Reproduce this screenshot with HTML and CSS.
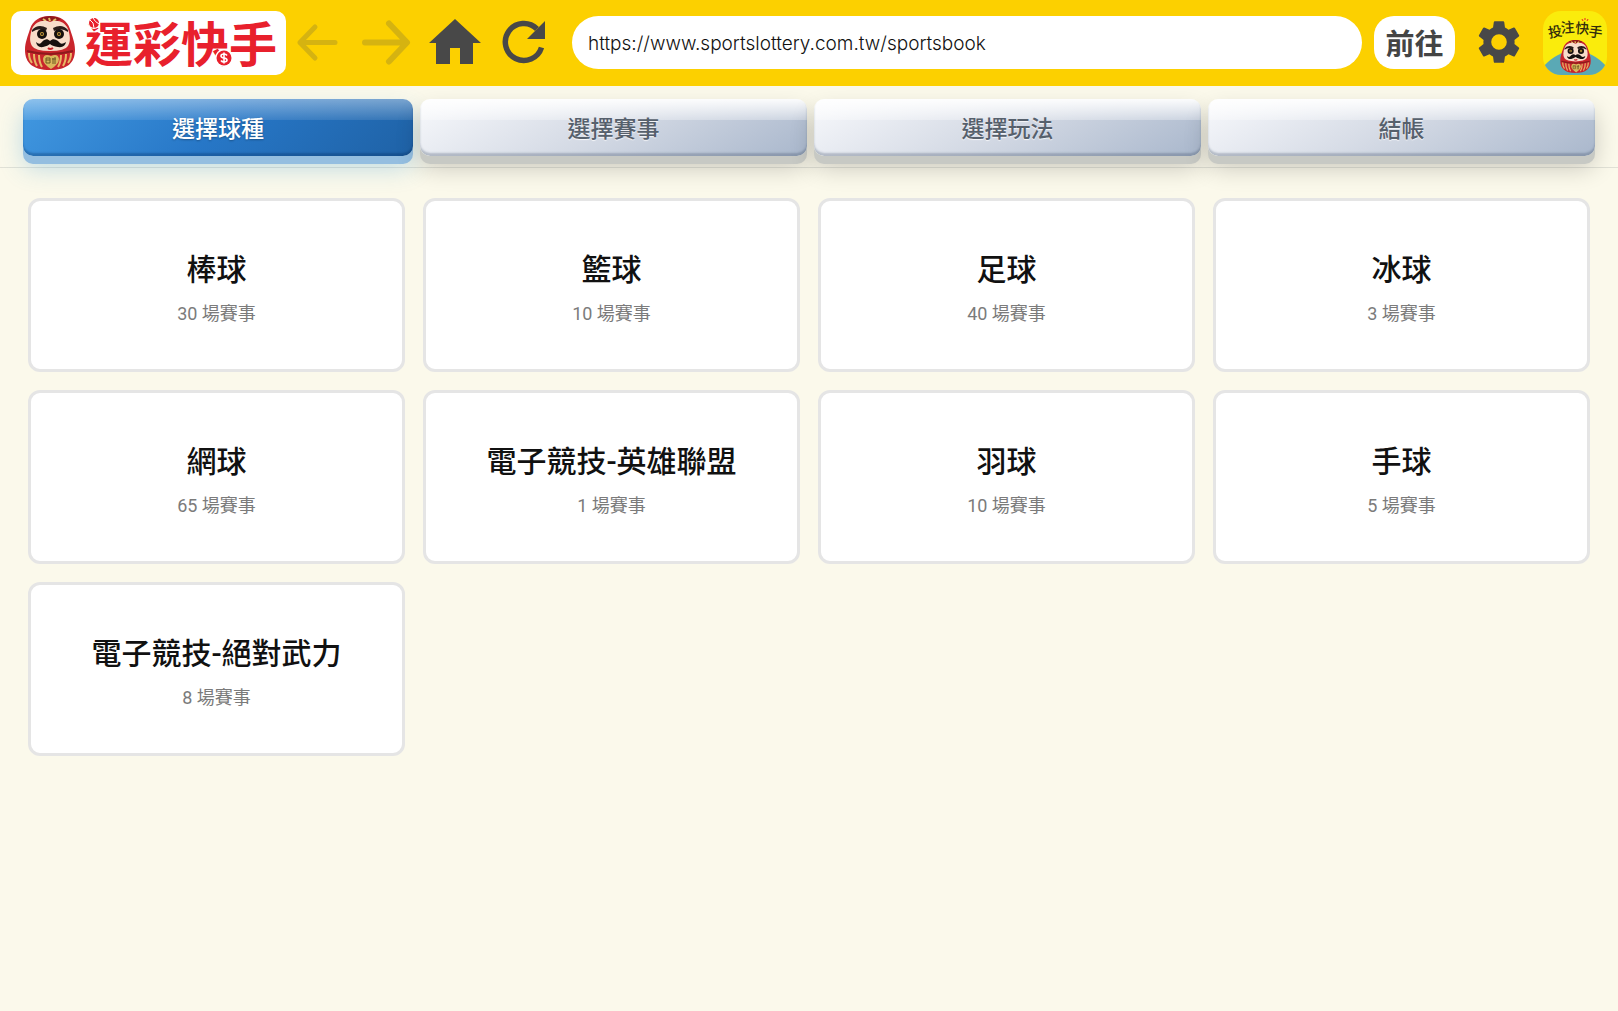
FILE: index.html
```html
<!DOCTYPE html>
<html lang="zh-Hant">
<head>
<meta charset="utf-8">
<meta name="viewport" content="width=device-width, initial-scale=1">
<title>運彩快手</title>
<link rel="stylesheet" href="styles.css">
</head>
<body>
<svg class="defs" aria-hidden="true">
  <symbol id="daruma" viewBox="0 0 50 54">
    <path d="M25 0C35 0 42 4 45 13C47 20 50 26 50 34C50 47 42 54 25 54S0 47 0 34C0 26 3 20 5 13C8 4 15 0 25 0Z" fill="#c9252c"/>
    <path d="M14 3Q25-3 36 3Q32 6 25 5Q18 6 14 3Z" fill="#8d1a1c"/>
    <path d="M18 3l3 2M24 2l1 3M31 3l-3 2" stroke="#e7c063" stroke-width="2"/>
    <path d="M25 6C31 3 40 5 43 13C45 19 46 25 43 30Q40 35 25 35T7 30C4 25 5 19 7 13C10 5 19 3 25 6Z" fill="#f8ddcb"/>
    <path d="M2 35Q25 41 48 35" fill="none" stroke="#8d1a1c" stroke-width="2"/>
    <path d="M4 37q0 6 3 10M9 38q0 7 3 12M14 39q0 7 3 12M46 37q0 6-3 10M41 38q0 7-3 12M36 39q0 7-3 12" fill="none" stroke="#e7b765" stroke-width="2"/>
    <path d="M7 14Q13 7 22 12L21 15Q14 11 7 16ZM43 14Q37 7 28 12L29 15Q36 11 43 16Z" fill="#2a1d1b"/>
    <circle cx="17" cy="18" r="5" fill="#17110f"/><circle cx="34" cy="18" r="5" fill="#17110f"/>
    <circle cx="17" cy="18" r="2" fill="#c99e3c"/><circle cx="34" cy="18" r="2" fill="#c99e3c"/>
    <circle cx="17" cy="18" r="1" fill="#17110f"/><circle cx="34" cy="18" r="1" fill="#17110f"/>
    <path d="M25 25C21 21 18 25 16 27Q14 29 11 26Q12 32 18 31Q23 30 25 28Q27 30 33 31Q40 32 41 26Q37 29 35 27C33 25 29 21 25 25Z" fill="#17110f"/>
    <path d="M23 32Q25 34 28 32" fill="none" stroke="#c9252c" stroke-width="2"/>
    <path d="M26 53Q18 48 18 43Q19 37 26 40Q33 37 34 43Q34 48 26 53Z" fill="#d9b75c"/>
    <path d="M21 42h4v5h-4zM21 44h4M28 42v6M27 43h4M30 41v7" fill="none" stroke="#6d5921"/>
  </symbol>
</svg>

<header class="topbar">
  <div class="brand">
    <svg class="brand-face" aria-hidden="true"><use href="#daruma"/></svg>
    <span class="brand-name">運彩快手</span>
    <svg class="brand-ball" viewBox="0 0 12 12" aria-hidden="true">
      <circle cx="6" cy="6" r="6" fill="#fff"/><circle cx="6" cy="6" r="5" fill="#e8202c"/>
      <path d="M2 3Q6 5 6 11M5 1Q7 5 11 7" fill="none" stroke="#fff"/>
    </svg>
    <svg class="brand-coin" viewBox="0 0 18 18" aria-hidden="true">
      <circle cx="9" cy="9" r="9" fill="#fff"/><circle cx="9" cy="9" r="7.5" fill="#e8202c"/>
      <path d="M12 6.5Q11 5 9 5Q6 5 6 7Q6 8.600 9 9T12 11Q12 13 9 13Q7 13 6 11.500M9 3.500v11" fill="none" stroke="#fff" stroke-width="1.600"/>
    </svg>
  </div>

  <nav class="nav" aria-label="瀏覽">
    <button class="icon-btn" type="button" aria-label="上一頁" disabled>
      <svg width="42" height="40" viewBox="0 0 42 40"><path d="M39 20.500H4M19 5L4 20.500L19 36" fill="none" stroke="#d5b311" stroke-width="5" stroke-linecap="round" stroke-linejoin="round"/></svg>
    </button>
    <button class="icon-btn" type="button" aria-label="下一頁" disabled>
      <svg width="50" height="46" viewBox="0 0 50 46"><path d="M4 23.500H45M28 4.500L46 23.500L28 42.500" fill="none" stroke="#d5b311" stroke-width="6" stroke-linecap="round" stroke-linejoin="round"/></svg>
    </button>
    <button class="icon-btn" type="button" aria-label="首頁">
      <svg width="52" height="46" viewBox="0 0 52 46"><path d="M26 0L52 24H44V45H31V29H21V45H7V24H0Z" fill="#484848"/></svg>
    </button>
    <button class="icon-btn" type="button" aria-label="重新整理">
      <svg width="44" height="44" viewBox="0 0 44 44"><path d="M39.500 27.500A18.500 18.500 0 1 1 35 9" fill="none" stroke="#484848" stroke-width="5.500"/><path d="M43 1V19H25Z" fill="#484848"/></svg>
    </button>
  </nav>

  <form class="address">
    <input class="url" type="text" aria-label="網址" value="https://www.sportslottery.com.tw/sportsbook">
    <button class="go" type="button">前往</button>
  </form>

  <button class="icon-btn settings" type="button" aria-label="設定">
    <svg width="52" height="52" viewBox="0 0 24 24"><path fill="#484848" d="M19.140 12.940c.04-.3.06-.61.06-.94 0-.32-.02-.64-.07-.94l2.030-1.580a.49.49 0 0 0 .12-.61l-1.920-3.320a.488.488 0 0 0-.59-.22l-2.390.96c-.5-.38-1.030-.7-1.620-.94l-.36-2.540a.484.484 0 0 0-.48-.41h-3.840c-.24 0-.43.17-.47.41l-.36 2.540c-.59.24-1.130.57-1.620.94l-2.390-.96c-.22-.08-.47 0-.59.22L2.740 8.870c-.12.21-.08.47.12.61l2.030 1.580c-.05.3-.09.63-.09.94s.02.64.07.94l-2.030 1.580a.49.49 0 0 0-.12.61l1.920 3.320c.12.22.37.29.59.22l2.390-.96c.5.38 1.030.7 1.620.94l.36 2.540c.05.24.24.41.48.41h3.840c.24 0 .44-.17.47-.41l.36-2.540c.59-.24 1.130-.56 1.620-.94l2.390.96c.22.08.47 0 .59-.22l1.920-3.320c.12-.22.07-.47-.12-.61zM12 15.600A3.600 3.600 0 1 1 12 8.400a3.600 3.600 0 0 1 0 7.200"/></svg>
  </button>

  <button class="app-badge" type="button" aria-label="投注快手">
    <svg width="64" height="64" viewBox="0 0 64 64">
      <rect width="64" height="64" fill="#faec0c"/>
      <path d="M0 64V56Q14 40 32 40T64 56V64Z" fill="#5aa9b5"/>
      <text class="badge-text" x="6 18 32 45" y="27 22 22 25" rotate="-10 -4 4 8">投注快手</text>
      <path d="M39 8l1 2M42 7v2M45 8l-1 2" stroke="#e8202c"/>
      <use href="#daruma" x="17" y="29" width="31" height="33"/>
    </svg>
  </button>
</header>

<nav class="tabs" aria-label="投注步驟">
  <button class="tab tab-active" type="button" aria-current="step">選擇球種</button>
  <button class="tab" type="button">選擇賽事</button>
  <button class="tab" type="button">選擇玩法</button>
  <button class="tab" type="button">結帳</button>
</nav>

<main class="sports">
  <button class="sport" type="button"><span class="sport-name">棒球</span><span class="sport-count">30 場賽事</span></button>
  <button class="sport" type="button"><span class="sport-name">籃球</span><span class="sport-count">10 場賽事</span></button>
  <button class="sport" type="button"><span class="sport-name">足球</span><span class="sport-count">40 場賽事</span></button>
  <button class="sport" type="button"><span class="sport-name">冰球</span><span class="sport-count">3 場賽事</span></button>
  <button class="sport" type="button"><span class="sport-name">網球</span><span class="sport-count">65 場賽事</span></button>
  <button class="sport" type="button"><span class="sport-name">電子競技-英雄聯盟</span><span class="sport-count">1 場賽事</span></button>
  <button class="sport" type="button"><span class="sport-name">羽球</span><span class="sport-count">10 場賽事</span></button>
  <button class="sport" type="button"><span class="sport-name">手球</span><span class="sport-count">5 場賽事</span></button>
  <button class="sport" type="button"><span class="sport-name">電子競技-絕對武力</span><span class="sport-count">8 場賽事</span></button>
</main>
</body>
</html>
```
FILE: styles.css
```css
* { box-sizing: border-box; }

body {
  margin: 0;
  min-height: 100vh;
  background: #fbf9eb;
  font-family: Roboto, "Noto Sans CJK TC", sans-serif;
  color: #111;
}

button, input { font-family: inherit; border: 0; margin: 0; }
button { padding: 0; cursor: pointer; }

.defs { position: absolute; width: 0; height: 0; }

.topbar {
  display: flex;
  align-items: center;
  height: 86px;
  padding: 0 11px;
  background: #fcd000;
}

.brand {
  position: relative;
  display: flex;
  align-items: center;
  gap: 10px;
  height: 64px;
  padding: 0 9px 0 14px;
  border-radius: 10px;
  background: #fff;
}
.brand-face { width: 50px; height: 54px; }
.brand-name {
  padding-bottom: 4px;
  font-family: "Noto Sans CJK TC", sans-serif;
  font-size: 48px;
  line-height: 60px;
  font-weight: 700;
  color: #e8202c;
}
.brand-ball { position: absolute; left: 77px; top: 6px; width: 12px; height: 12px; }
.brand-coin { position: absolute; left: 204px; top: 38px; width: 18px; height: 18px; }

.nav { display: flex; gap: 7px; }
.icon-btn {
  display: flex;
  align-items: center;
  justify-content: center;
  width: 62px;
  height: 62px;
  padding-bottom: 2px;
  background: none;
}

.address { display: flex; flex: 1; gap: 12px; margin: 0 0 1px 17px; }
.url {
  flex: 1;
  min-width: 0;
  height: 53px;
  padding: 2px 16px 0;
  border-radius: 27px;
  background: #fff;
  font-family: Inter, sans-serif;
  font-size: 19px;
  font-weight: 300;
  color: #111;
}
.go {
  width: 81px;
  height: 53px;
  padding-bottom: 2px;
  border-radius: 20px;
  background: #fff;
  font-size: 29px;
  font-weight: 700;
  color: #444;
}
.settings { margin: 0 13px; }
.app-badge { height: 64px; border-radius: 18px; overflow: hidden; background: none; }
.app-badge svg { display: block; }
.badge-text { font-family: "Noto Sans CJK TC", sans-serif; font-size: 14px; font-weight: 500; fill: #332c0c; }

.tabs {
  display: flex;
  gap: 7px;
  padding: 13px 23px 11px;
  border-bottom: 1px solid #e1e1d6;
}
.tab {
  flex: 1 1 0;
  height: 57px;
  padding-bottom: 2px;
  border-radius: 10px;
  background:
    linear-gradient(rgba(255, 255, 255, .95), rgba(255, 255, 255, .3)) 0 0 / 100% 21px no-repeat,
    linear-gradient(150deg, #f8f9fc, #d3d9e4 50%, #a9b7cc);
  box-shadow:
    inset 0 -3px 2px rgba(60, 75, 100, .3),
    0 8px 0 #c7c9c4,
    0 12px 24px rgba(0, 0, 0, .2);
  font-size: 23px;
  font-weight: 500;
  color: #56606c;
  text-shadow: 0 1px 1px rgba(255, 255, 255, .8);
}
.tab-active {
  flex-basis: 3px;
  background:
    linear-gradient(rgba(255, 255, 255, .4), rgba(255, 255, 255, .1)) 0 0 / 100% 21px no-repeat,
    linear-gradient(135deg, #4299e1, #2777c7 50%, #1f62a6);
  box-shadow:
    inset 0 -3px 2px rgba(0, 40, 90, .3),
    0 8px 0 #94bee0,
    0 12px 24px rgba(50, 150, 210, .3);
  color: #fff;
  text-shadow: 0 1px 2px rgba(0, 0, 0, .3);
}

.sports {
  display: grid;
  grid-template-columns: repeat(4, 1fr);
  gap: 18px;
  padding: 30px 28px;
}
.sport {
  display: flex;
  flex-direction: column;
  align-items: center;
  justify-content: center;
  gap: 10px;
  height: 174px;
  padding-top: 8px;
  border: 3px solid #e5e5e5;
  border-radius: 12px;
  background: #fff;
}
.sport-name { font-size: 30px; line-height: 40px; font-weight: 500; color: #111; }
.sport-count { font-size: 18px; line-height: 28px; color: #7b7b7b; }
```
